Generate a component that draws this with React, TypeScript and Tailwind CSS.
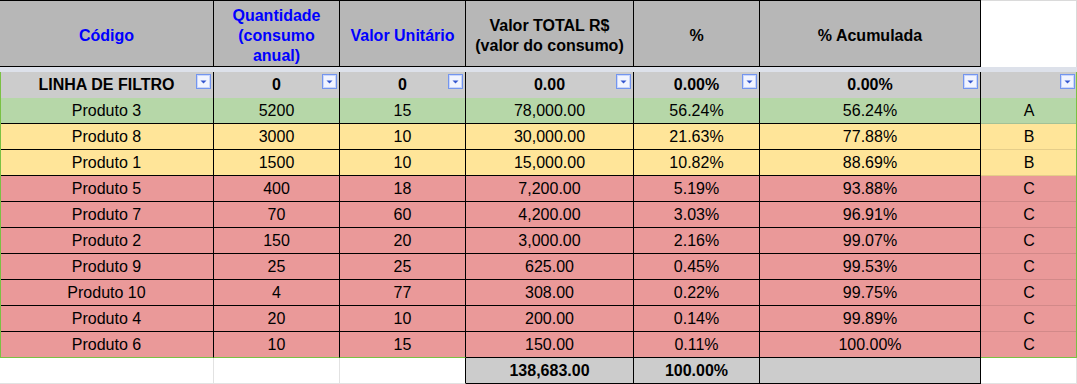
import React from 'react';

// Planilha de curva ABC (Google Sheets look)

const cols = 'grid grid-cols-[214px_126px_126px_168px_126px_221px_96px]';

type Row = {
  code: string;
  qty: string;
  unit: string;
  total: string;
  pct: string;
  acc: string;
  cls: 'A' | 'B' | 'C';
};

const rows: Row[] = [
  { code: 'Produto 3', qty: '5200', unit: '15', total: '78,000.00', pct: '56.24%', acc: '56.24%', cls: 'A' },
  { code: 'Produto 8', qty: '3000', unit: '10', total: '30,000.00', pct: '21.63%', acc: '77.88%', cls: 'B' },
  { code: 'Produto 1', qty: '1500', unit: '10', total: '15,000.00', pct: '10.82%', acc: '88.69%', cls: 'B' },
  { code: 'Produto 5', qty: '400', unit: '18', total: '7,200.00', pct: '5.19%', acc: '93.88%', cls: 'C' },
  { code: 'Produto 7', qty: '70', unit: '60', total: '4,200.00', pct: '3.03%', acc: '96.91%', cls: 'C' },
  { code: 'Produto 2', qty: '150', unit: '20', total: '3,000.00', pct: '2.16%', acc: '99.07%', cls: 'C' },
  { code: 'Produto 9', qty: '25', unit: '25', total: '625.00', pct: '0.45%', acc: '99.53%', cls: 'C' },
  { code: 'Produto 10', qty: '4', unit: '77', total: '308.00', pct: '0.22%', acc: '99.75%', cls: 'C' },
  { code: 'Produto 4', qty: '20', unit: '10', total: '200.00', pct: '0.14%', acc: '99.89%', cls: 'C' },
  { code: 'Produto 6', qty: '10', unit: '15', total: '150.00', pct: '0.11%', acc: '100.00%', cls: 'C' },
];

const rowBg = {
  A: 'bg-[#b6d7a8]',
  B: 'bg-[#ffe599]',
  C: 'bg-[#ea9999]',
};

function FilterIcon() {
  return (
    <svg
      className="absolute right-[2px] top-[2px]"
      width="15"
      height="15"
      viewBox="0 0 15 15"
    >
      <rect x="0.5" y="0.5" width="14" height="14" fill="#f1f4ff" stroke="#7395ef" />
      <rect x="1.5" y="1.5" width="12" height="12" fill="none" stroke="#c9d6fb" />
      <polygon points="4.5,6.5 10.5,6.5 7.5,9.5" fill="#3556cf" />
    </svg>
  );
}

export default function App() {
  const head = 'flex items-center justify-center text-center font-bold leading-[20px] bg-[#b7b7b7] border-t border-b border-r border-black pt-1 px-1';
  const filt = 'relative flex items-center justify-center font-bold bg-[#cccccc] border-r border-black';
  const cell = 'flex items-center justify-center border-r border-b border-black';

  return (
    <div
      className="w-[1077px] h-[384px] bg-white text-[16px] text-black overflow-hidden"
      style={{ fontFamily: '"Liberation Sans", Arial, sans-serif' }}
    >
      {/* cabeçalho */}
      <div className={`${cols} h-[67px]`}>
        <div className={`${head} text-[#0000ff]`}>Código</div>
        <div className={`${head} text-[#0000ff]`}>Quantidade (consumo anual)</div>
        <div className={`${head} text-[#0000ff]`}>Valor Unitário</div>
        <div className={head}>
          <span>
            Valor TOTAL R$
            <br />
            (valor do consumo)
          </span>
        </div>
        <div className={head}>%</div>
        <div className={head}>% Acumulada</div>
        <div className="bg-white border-t border-r border-[#dadada] border-b-[#dde1ea]" />
      </div>

      {/* faixa de congelamento */}
      <div className="h-[5px] bg-[#dde1ea]" />

      {/* filtro + dados */}
      <div className="relative">
        <div className={`${cols} h-[26px]`}>
          <div className={filt}>
            LINHA DE FILTRO
            <FilterIcon />
          </div>
          <div className={filt}>
            0
            <FilterIcon />
          </div>
          <div className={filt}>
            0
            <FilterIcon />
          </div>
          <div className={filt}>
            0.00
            <FilterIcon />
          </div>
          <div className={filt}>
            0.00%
            <FilterIcon />
          </div>
          <div className={filt}>
            0.00%
            <FilterIcon />
          </div>
          <div className="relative bg-[#cccccc]">
            <FilterIcon />
          </div>
        </div>

        {rows.map((r, i) => {
          const last = i === rows.length - 1;
          const side = last ? 'border-b-[#7ac143]' : '';
          return (
            <div key={r.code} className={`${cols} h-[26px] ${rowBg[r.cls]}`}>
              <div className={`${cell} ${side}`}>{r.code}</div>
              <div className={`${cell} ${side}`}>{r.qty}</div>
              <div className={`${cell} ${side}`}>{r.unit}</div>
              <div className={cell}>{r.total}</div>
              <div className={cell}>{r.pct}</div>
              <div className={cell}>{r.acc}</div>
              <div
                className={`flex items-center justify-center border-b ${
                  last ? 'border-[#7ac143]' : 'border-black/10'
                }`}
              >
                {r.cls}
              </div>
            </div>
          );
        })}

        <div className="pointer-events-none absolute inset-0 border-l border-r border-[#7ac143]" />
      </div>

      {/* total */}
      <div className={`${cols} h-[26px]`}>
        <div className="border-r border-b border-[#e2e2e2]" />
        <div className="border-r border-b border-[#e2e2e2]" />
        <div className="border-r border-black border-b border-b-[#e2e2e2]" />
        <div className="flex items-center justify-center font-bold bg-[#cccccc] border-r border-b border-black">
          138,683.00
        </div>
        <div className="flex items-center justify-center font-bold bg-[#cccccc] border-r border-b border-black">
          100.00%
        </div>
        <div className="bg-[#cccccc] border-r border-b border-black" />
        <div className="border-r border-b border-[#e2e2e2]" />
      </div>
    </div>
  );
}
